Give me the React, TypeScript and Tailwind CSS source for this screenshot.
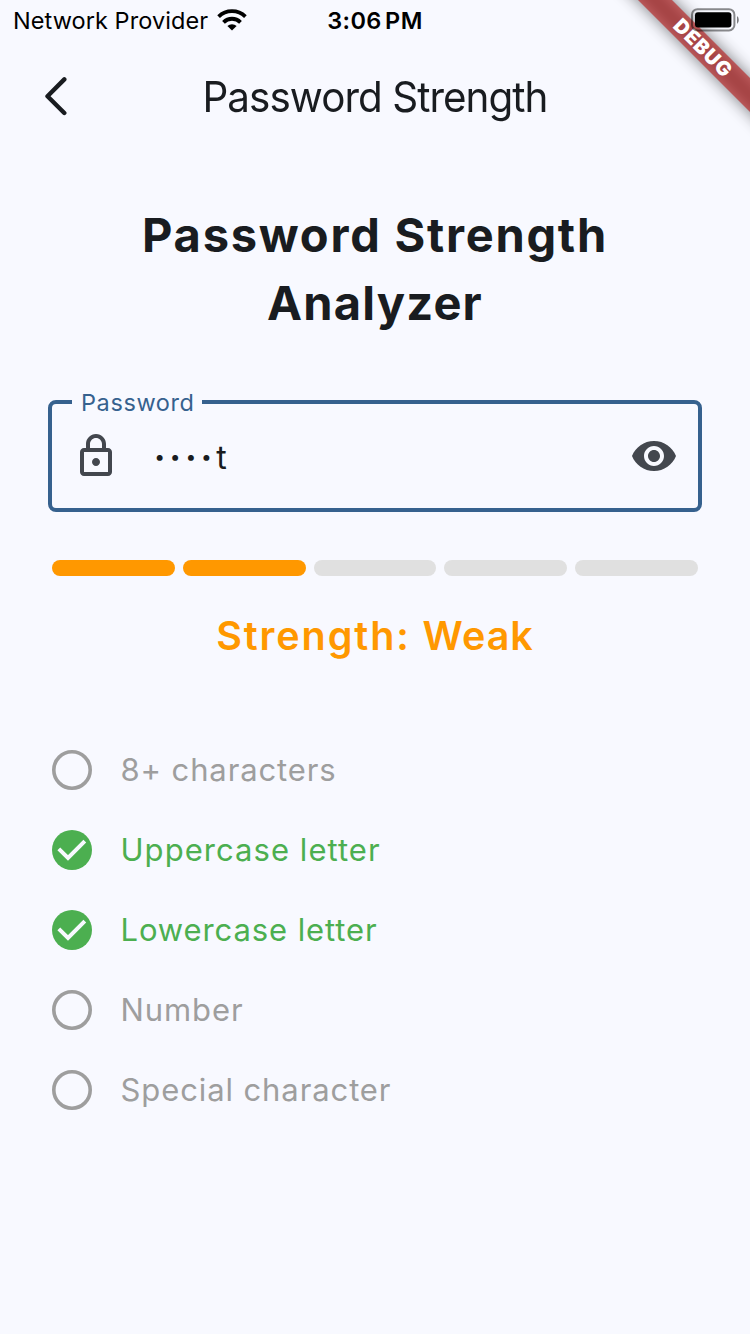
const requirements = [
  { label: '8+ characters', met: false, tracking: 'tracking-[0.88px]' },
  { label: 'Uppercase letter', met: true, tracking: 'tracking-[1.05px]' },
  { label: 'Lowercase letter', met: true, tracking: 'tracking-[0.9px]' },
  { label: 'Number', met: false, tracking: 'tracking-[0.9px]' },
  { label: 'Special character', met: false, tracking: 'tracking-[0.9px]' },
];

function StatusIcon({ met }: { met: boolean }) {
  return (
    <svg viewBox="0 0 24 24" className="size-12 shrink-0">
      {met ? (
        <>
          <circle cx="12" cy="12" r="10" fill="#4caf50" />
          <path d="M5.4 11.4 10 16 18.4 7.6" fill="none" stroke="#f8f9ff" strokeWidth="2" />
        </>
      ) : (
        <circle cx="12" cy="12" r="9.1" fill="none" stroke="#9e9e9e" strokeWidth="1.8" />
      )}
    </svg>
  );
}

function StatusBar() {
  return (
    <div className="relative z-20 grid h-10 grid-cols-3 items-center text-black">
      <div className="flex items-center pl-[13px]">
        <span className="whitespace-nowrap pt-px text-[23.5px] leading-[39px] tracking-[0.07px]">Network Provider</span>
        <svg viewBox="0 0 30 22" className="ml-[9px] h-[22px] w-[30px] shrink-0">
          <g fill="none" stroke="#000" strokeWidth="3.8">
            <path d="M1.6 7.6A19.2 19.2 0 0 1 28.4 7.6" />
            <path d="M6.5 13.3A12 12 0 0 1 23.5 13.3" />
          </g>
          <path d="M10.4 17.1a6.6 6.6 0 0 1 9.2 0L15 21.6z" />
        </svg>
      </div>
      <span className="whitespace-nowrap pt-px text-center text-[23.5px] font-semibold leading-[39px] tracking-[0.4px] [word-spacing:-3px]">3:06 PM</span>
      <div className="flex justify-end pr-[10px]">
        <svg viewBox="0 0 50 24" className="h-6 w-[50px]">
          <rect x="2" y="1.2" width="42.4" height="21.2" rx="5.5" fill="none" stroke="#000" strokeOpacity=".45" strokeWidth="2" />
          <rect x="5" y="4.2" width="36.4" height="15.2" rx="3" />
          <path d="M47 8v8q1.8-1.2 1.8-4T47 8z" fillOpacity=".5" />
        </svg>
      </div>
    </div>
  );
}

function DebugBanner() {
  return (
    <div className="pointer-events-none absolute left-[582px] top-[35px] z-10 h-6 w-60 rotate-45">
      <div className="absolute inset-0 bg-black/50 blur-[8px]" />
      <div className="absolute inset-0 flex items-center justify-center bg-[#b71c1c]/63 pl-[3px] text-[20px] font-black leading-6 tracking-[0.8px] text-white">
        DEBUG
      </div>
    </div>
  );
}

export default function App() {
  return (
    <div className="relative flex h-[1334px] w-[750px] flex-col overflow-hidden bg-[#f8f9ff] font-['Inter',sans-serif] text-[#191c20]">
      <StatusBar />
      <DebugBanner />
      <header className="grid h-28 grid-cols-[112px_1fr_112px] items-center">
        <svg viewBox="0 0 24 40" className="ml-11 h-10 w-6" fill="none" stroke="#191c20" strokeWidth="4.4" strokeLinecap="round" strokeLinejoin="round">
          <path d="M20.3 3.4 3.5 20.2 20.3 37" />
        </svg>
        <h1 className="scale-x-95 whitespace-nowrap pt-px text-center text-[42.5px] font-normal leading-[56px] tracking-[-1px]">Password Strength</h1>
      </header>
      <main className="flex flex-col px-12 pt-[49px]">
        <h2 className="text-center text-[47px] font-bold leading-[68px] tracking-[1.75px]">
          Password Strength
          <br />
          <span className="tracking-[1.2px]">Analyzer</span>
        </h2>
        <div className="relative mt-[63px] flex h-28 items-center rounded-[8px] border-4 border-[#36618e] px-5">
          <span className="absolute -top-[17px] left-5 w-[130px] whitespace-nowrap bg-[#f8f9ff] pl-[9px] text-[23.5px] leading-8 tracking-[0.6px] text-[#36618e]">Password</span>
          <svg viewBox="0 0 24 24" className="size-12" fill="#43474e">
            <path d="M18 8h-1V6c0-2.76-2.24-5-5-5S7 3.24 7 6v2H6c-1.1 0-2 .9-2 2v10c0 1.1.9 2 2 2h12c1.1 0 2-.9 2-2V10c0-1.1-.9-2-2-2zM9 6c0-1.66 1.34-3 3-3s3 1.34 3 3v2H9V6zm9 14H6V10h12v10zm-6-3c1.1 0 2-.9 2-2s-.9-2-2-2-2 .9-2 2 .9 2 2 2z" />
          </svg>
          <span className="ml-[34px] flex flex-1 pt-[3px] text-[32px] leading-[48px]">
            <span className="whitespace-nowrap font-extrabold tracking-[4.3px]">····</span>
            <span>t</span>
          </span>
          <svg viewBox="0 0 24 24" className="size-12" fill="#43474e">
            <path d="M12 4.5C7 4.5 2.73 7.61 1 12c1.73 4.39 6 7.5 11 7.5s9.27-3.11 11-7.5c-1.73-4.39-6-7.5-11-7.5zM12 17c-2.76 0-5-2.24-5-5s2.24-5 5-5 5 2.24 5 5-2.24 5-5 5zm0-8c-1.66 0-3 1.34-3 3s1.34 3 3 3 3-1.34 3-3-1.34-3-3-3z" />
          </svg>
        </div>
        <div className="mt-12 grid grid-cols-5 gap-2 px-1">
          {[0, 1, 2, 3, 4].map((i) => (
            <div key={i} className={i < 2 ? 'h-4 rounded-full bg-[#ff9800]' : 'h-4 rounded-full bg-[#e0e0e0]'} />
          ))}
        </div>
        <p className="mt-8 text-center text-[39.5px] font-semibold leading-[56px] tracking-[1.9px] text-[#ff9800]">
          Strength: <span className="tracking-[1px]">Weak</span>
        </p>
        <ul className="mt-[66px] flex flex-col">
          {requirements.map(({ label, met, tracking }) => (
            <li key={label} className={`flex h-20 items-center gap-[24.5px] text-[31px] ${tracking} ${met ? 'text-[#4caf50]' : 'text-[#9e9e9e]'}`}>
              <StatusIcon met={met} />
              <span className="pt-px">{label}</span>
            </li>
          ))}
        </ul>
      </main>
    </div>
  );
}
